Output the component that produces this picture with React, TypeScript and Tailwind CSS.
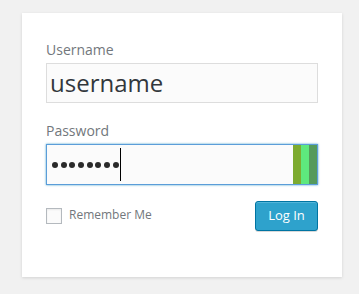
import React from "react";

export default function App() {
  const dots = [0, 1, 2, 3, 4, 5, 6, 7];
  return (
    <div className="w-[359px] h-[294px] bg-[#f1f1f1] pt-[13px] pl-[22px]" style={{ fontFamily: '"Open Sans", sans-serif' }}>
      <div className="w-[320px] bg-white shadow-[0_1px_3px_rgba(0,0,0,0.13)] pt-[26px] px-[24px] pb-[46px]">
        <label className="block text-[14px] leading-[21px] text-[#72777c]">Username</label>
        <div className="mt-[3px] h-[40px] border border-[#dddddd] bg-[#fbfbfb] flex items-center pl-[3px] text-[24px] text-[#32373c] leading-none">
          <span className="-mt-[1px]">username</span>
        </div>
        <label className="block mt-[17px] text-[14px] leading-[21px] text-[#72777c]">Password</label>
        <div className="mt-[3px] h-[41px] border border-[#5b9dd9] shadow-[0_0_2px_rgba(30,140,190,0.8)] bg-[#fbfbfb] flex items-stretch">
          <div className="flex-1 flex items-center pl-[5px]">
            <div className="flex gap-[2.7px]">
              {dots.map((d) => (
                <div key={d} className="w-[6px] h-[6px] rounded-full bg-[#2a2a2a]" />
              ))}
            </div>
            <div className="ml-[1px] w-[1px] h-[33px] bg-black" />
          </div>
          <div className="w-[8px] bg-[#7dab2f]" />
          <div className="w-[8px] bg-[#5ee87d]" />
          <div className="w-[8px] bg-[#559a5c]" />
        </div>
        <div className="mt-[16px] flex items-center justify-between">
          <div className="flex items-center">
            <div className="w-[16px] h-[16px] border border-[#b4b9be] bg-[#fbfbfb] shadow-[inset_0_1px_2px_rgba(0,0,0,0.07)]" />
            <span className="ml-[7px] text-[12px] text-[#72777c] -mt-[3px]">Remember Me</span>
          </div>
          <button className="h-[30px] w-[63px] rounded-[3px] bg-[#2ea2cc] border border-[#0074a2] text-white text-[13px] shadow-[inset_0_1px_0_rgba(120,200,230,0.5),0_1px_0_rgba(0,0,0,0.15)]">
            Log In
          </button>
        </div>
      </div>
    </div>
  );
}
